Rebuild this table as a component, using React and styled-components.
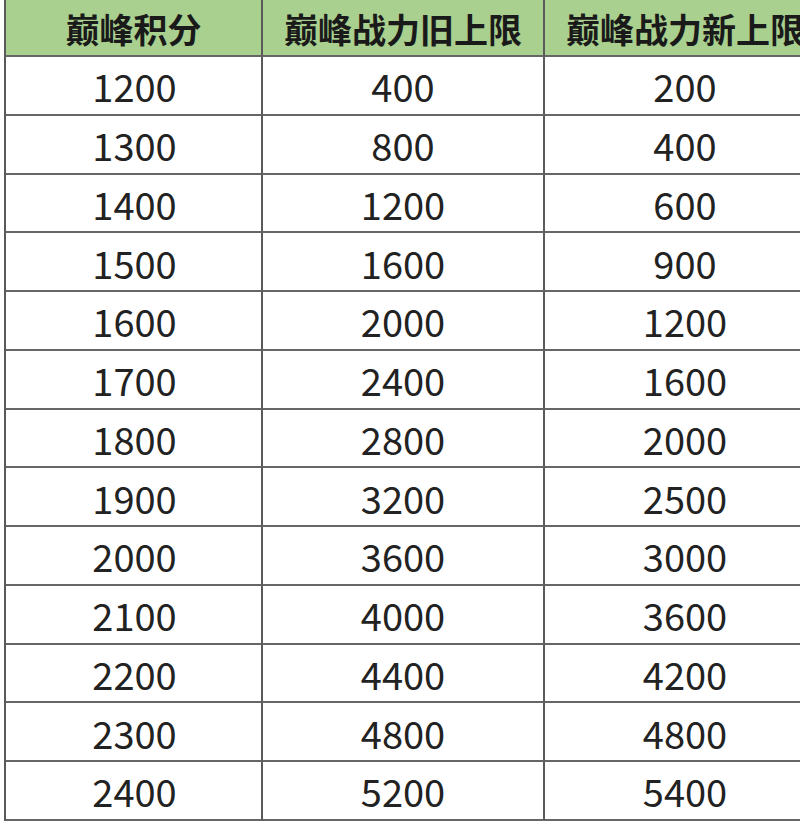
import React from "react";
import styled, { createGlobalStyle } from "styled-components";

const rows = [
  [1200, 400, 200],
  [1300, 800, 400],
  [1400, 1200, 600],
  [1500, 1600, 900],
  [1600, 2000, 1200],
  [1700, 2400, 1600],
  [1800, 2800, 2000],
  [1900, 3200, 2500],
  [2000, 3600, 3000],
  [2100, 4000, 3600],
  [2200, 4400, 4200],
  [2300, 4800, 4800],
  [2400, 5200, 5400],
];

const headers = ["巅峰积分", "巅峰战力旧上限", "巅峰战力新上限"];

const App = () => {
  return (
    <>
      <GlobalStyle />
      <T.Page>
        <T.Grid>
          {headers.map((h) => (
            <T.HeadCell key={h}>{h}</T.HeadCell>
          ))}
          {rows.map((r) =>
            r.map((v, i) => (
              <T.Cell key={r[0] + "-" + i} $first={i === 0}>
                {v}
              </T.Cell>
            ))
          )}
        </T.Grid>
      </T.Page>
    </>
  );
};

export default App;

const GlobalStyle = createGlobalStyle`
  html, body {
    margin: 0;
    padding: 0;
    background: #ffffff;
    overflow: hidden;
  }
`;

const T = {
  Page: styled.div`
    width: 800px;
    height: 824px;
    overflow: hidden;
    background: #ffffff;
    font-family: "Noto Sans CJK SC", "Noto Sans", sans-serif;
  `,
  Grid: styled.div`
    display: grid;
    grid-template-columns: 257px 282px 282px;
    grid-template-rows: 57px;
    grid-auto-rows: 58.75px;
    margin-left: 4px;
    width: max-content;
    border-left: 2px solid #5a5a5a;
  `,
  HeadCell: styled.div`
    display: flex;
    align-items: center;
    justify-content: center;
    box-sizing: border-box;
    background: #a9d08e;
    border-right: 2px solid #5a5a5a;
    border-bottom: 2px solid #666666;
    color: #1a1a1a;
    font-size: 34px;
    font-weight: 700;
    white-space: nowrap;
    padding-top: 1px;
  `,
  Cell: styled.div`
    display: flex;
    align-items: center;
    justify-content: center;
    box-sizing: border-box;
    border-right: 2px solid #5a5a5a;
    border-bottom: 2px solid #666666;
    color: #222222;
    font-size: 38px;
    font-weight: 400;
    padding-top: 1px;
    padding-left: ${(p) => (p.$first ? "2px" : "0")};
  `,
};
